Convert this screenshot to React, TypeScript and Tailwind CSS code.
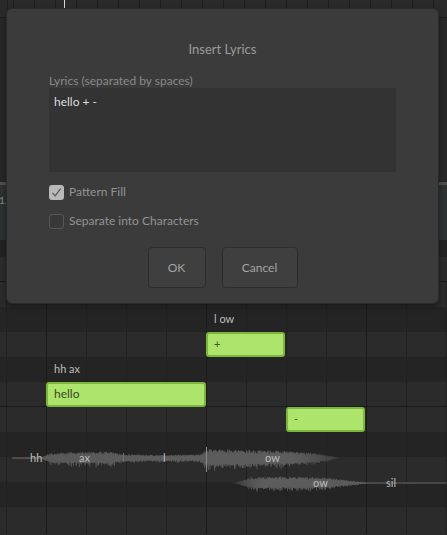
import clsx from 'clsx';

// piano-roll grid: bar lines every 160px, beat lines every 40px
const GRID =
  'bg-[image:repeating-linear-gradient(90deg,#1a1a1a_0_1px,transparent_1px_160px),repeating-linear-gradient(90deg,#202020_0_1px,transparent_1px_40px)] bg-[position:46px_0,6px_0]';

function rng(seed: number) {
  let s = seed;
  return () => {
    s = (s * 1664525 + 1013904223) % 4294967296;
    return s / 4294967296;
  };
}

function envAt(points: [number, number][], x: number) {
  if (x <= points[0][0]) return points[0][1];
  for (let i = 1; i < points.length; i++) {
    const [x1, a1] = points[i];
    const [x0, a0] = points[i - 1];
    if (x <= x1) return a0 + ((a1 - a0) * (x - x0)) / (x1 - x0);
  }
  return points[points.length - 1][1];
}

function wavePath(points: [number, number][], from: number, to: number, cy: number, seed: number) {
  const r = rng(seed);
  let d = '';
  for (let x = from; x <= to; x += 0.5) {
    const a = envAt(points, x);
    if (a <= 0) continue;
    const up = Math.max(0.5, a * (0.55 + 0.45 * r()));
    const down = Math.max(0.5, a * (0.6 + 0.85 * r() * r() + 0.2 * r()));
    d += `M${x.toFixed(1)} ${(cy - up).toFixed(1)}V${(cy + down).toFixed(1)}`;
  }
  return d;
}

const ENV1: [number, number][] = [
  [12, 0], [14, 0.6], [42, 0.8], [50, 5], [75, 6], [110, 6.5], [122, 4], [160, 3], [200, 3.5],
  [206, 9], [215, 9], [250, 8], [300, 6.5], [322, 4], [334, 1.5], [338, 0],
];
const ENV2: [number, number][] = [
  [232, 0], [240, 2], [252, 6], [300, 6.5], [330, 5], [345, 3], [360, 1.2], [368, 0.5], [447, 0.5],
];

const wave1 = wavePath(ENV1, 12, 338, 18, 7);
const wave2 = wavePath(ENV2, 232, 446, 43, 19);

function Row({ dark, className, children }: { dark?: boolean; className?: string; children?: React.ReactNode }) {
  return (
    <div className={clsx('flex h-[25px] items-center', dark ? 'bg-[#242424]' : 'bg-[#2b2b2b]', GRID, className)}>
      {children}
    </div>
  );
}

function Waveform() {
  return (
    <div className="pointer-events-none absolute left-0 top-[440px] h-[60px] w-[447px]">
      <svg width="447" height="60" viewBox="0 0 447 60" className="absolute inset-0">
        <defs>
          <linearGradient id="fadeOut" gradientUnits="userSpaceOnUse" x1="0" y1="0" x2="340" y2="0">
            <stop offset="0" stopColor="#5c5c5c" />
            <stop offset="0.86" stopColor="#616161" />
            <stop offset="1" stopColor="#616161" stopOpacity="0.15" />
          </linearGradient>
          <linearGradient id="fadeIn" gradientUnits="userSpaceOnUse" x1="232" y1="0" x2="447" y2="0">
            <stop offset="0" stopColor="#616161" stopOpacity="0.1" />
            <stop offset="0.14" stopColor="#616161" />
            <stop offset="1" stopColor="#5c5c5c" />
          </linearGradient>
        </defs>
        <path d={wave1} stroke="url(#fadeOut)" strokeWidth="0.8" />
        <path d={wave2} stroke="url(#fadeIn)" strokeWidth="0.8" />
        <path d="M123.5 13V22" stroke="#6e6e6e" strokeWidth="1" />
        <path d="M206.5 7V32" stroke="#8a8a8a" strokeWidth="1" />
      </svg>
      <span className="absolute left-[30px] top-[11px] text-[11px] leading-[14px] text-[#bdbdbd]">hh</span>
      <span className="absolute left-[79px] top-[11px] text-[11px] leading-[14px] text-[#bdbdbd]">ax</span>
      <span className="absolute left-[163px] top-[11px] text-[11px] leading-[14px] text-[#bdbdbd]">l</span>
      <span className="absolute left-[265px] top-[11px] text-[11px] leading-[14px] text-[#bdbdbd]">ow</span>
      <span className="absolute left-[313px] top-[36px] text-[11px] leading-[14px] text-[#bdbdbd]">ow</span>
      <span className="absolute left-[386px] top-[36px] text-[11px] leading-[14px] text-[#bdbdbd]">sil</span>
    </div>
  );
}

function Checkbox({ checked, label }: { checked?: boolean; label: string }) {
  return (
    <div className="flex h-[16px] items-center gap-[5px]">
      {checked ? (
        <div className="flex h-[15px] w-[15px] items-center justify-center rounded-[3px] bg-[#b9b9b9]">
          <svg width="11" height="11" viewBox="0 0 11 11">
            <path d="M1.5 5.8L4.2 8.8L9.6 1.6" fill="none" stroke="#555555" strokeWidth="1.2" />
          </svg>
        </div>
      ) : (
        <div className="h-[15px] w-[15px] rounded-[3px] border border-[#585858] bg-[#383838]" />
      )}
      <span className="text-[12px] leading-[16px] text-[#939393]">{label}</span>
    </div>
  );
}

function InsertLyricsDialog() {
  return (
    <div className="absolute left-[7px] top-[9px] flex h-[294px] w-[431px] flex-col rounded-[5px] bg-[#3b3b3b] px-[42px] shadow-[0_0_0_1px_#2a2a2a,0_3px_6px_rgba(0,0,0,0.5)]">
      <div className="mt-[31px] text-center text-[13px] leading-[18px] text-[#9c9c9c]">Insert Lyrics</div>
      <div className="mt-[16px] text-[12px] leading-[14px] text-[#898989]">Lyrics (separated by spaces)</div>
      <div className="h-[84px] bg-[#333333] px-[5px] pt-[7px] text-[12px] leading-[14px] text-[#dcdcdc]">hello + -</div>
      <div className="mt-[12px]">
        <Checkbox checked label="Pattern Fill" />
      </div>
      <div className="mt-[13px]">
        <Checkbox label="Separate into Characters" />
      </div>
      <div className="mt-[18px] flex justify-center gap-[16px]">
        <button className="h-[41px] w-[58px] rounded-[4px] border border-[#2d2d2d] bg-[#3f3f3f] text-[12px] text-[#a4a4a4]">
          OK
        </button>
        <button className="h-[41px] w-[76px] rounded-[4px] border border-[#2d2d2d] bg-[#3f3f3f] text-[12px] text-[#a4a4a4]">
          Cancel
        </button>
      </div>
    </div>
  );
}

export default function App() {
  return (
    <div className="relative h-[535px] w-[447px] overflow-hidden bg-[#2b2b2b] font-[Lato,sans-serif]">
      {/* timeline header */}
      <div className="h-[18px] border-b border-[#1d1d1d] bg-[#2a2a2a] bg-[image:repeating-linear-gradient(90deg,#1d1d1d_0_1px,transparent_1px_21px)] bg-[position:13px_0]" />
      <div className="absolute left-[64px] top-0 h-[9px] w-px bg-[#d6d6d6]" />

      {/* track area behind the dialog */}
      <div className="h-[164px] bg-[#272727]" />
      <div className="h-[3px] bg-[#4e4e4e]" />
      <div className="h-[55px] bg-[#2d3131] pt-[9px] text-[10px] leading-[12px] text-[#8a8a8a]">
        <span className="-ml-[1px]">1.1</span>
      </div>
      <div className="h-[17px] bg-[#232323]" />
      <div className="h-[25px] border-b border-[#1c1c1c] bg-[#2b2b2b]" />

      {/* piano roll */}
      <Row />
      <Row dark>
        <span className="ml-[214px] text-[11px] text-[#bdbdbd]">l ow</span>
      </Row>
      <Row>
        <div className="ml-[206px] flex h-[25px] w-[79px] items-center rounded-[3px] border-2 border-[#7bb73a] bg-[#ade56c] pl-[6px] text-[11px] text-[#46552f]">
          +
        </div>
      </Row>
      <Row dark>
        <span className="ml-[54px] text-[11px] text-[#bdbdbd]">hh ax</span>
      </Row>
      <Row className="border-b border-[#1a1a1a]">
        <div className="ml-[46px] flex h-[25px] w-[160px] items-center rounded-[3px] border-2 border-[#7bb73a] bg-[#ade56c] pl-[6px] text-[12px] text-[#3b4728]">
          hello
        </div>
      </Row>
      <Row>
        <div className="ml-[286px] flex h-[25px] w-[79px] items-center rounded-[3px] border-2 border-[#7bb73a] bg-[#ade56c] pl-[6px] text-[11px] text-[#46552f]">
          -
        </div>
      </Row>
      <Row dark />
      <Row />
      <Row dark />
      <Row className="h-[27px]" />

      <Waveform />
      <InsertLyricsDialog />
    </div>
  );
}
